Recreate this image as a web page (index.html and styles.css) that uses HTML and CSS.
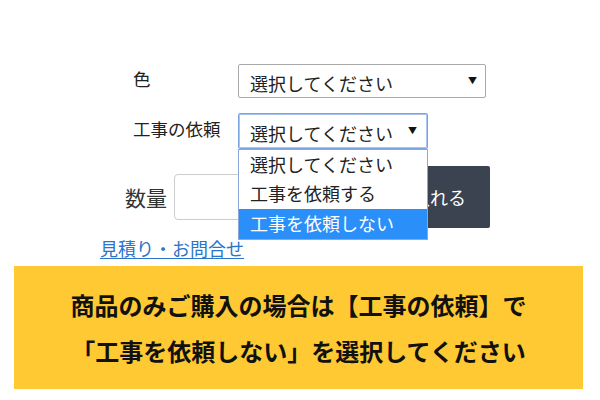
FILE: index.html
```html
<!DOCTYPE html>
<html lang="ja">
<head>
<meta charset="utf-8">
<link rel="stylesheet" href="styles.css">
</head>
<body>
<div class="page">
  <div class="fields">
    <div class="label">色</div>
    <div class="select select-wide">
      <span class="select-text">選択してください</span>
      <span class="arrow">▼</span>
    </div>
    <div class="label">工事の依頼</div>
    <div class="select-wrap">
      <div class="select select-focus">
        <span class="select-text">選択してください</span>
        <span class="arrow">▼</span>
      </div>
      <ul class="dropdown">
        <li class="option">選択してください</li>
        <li class="option">工事を依頼する</li>
        <li class="option option-active">工事を依頼しない</li>
      </ul>
    </div>
  </div>
  <div class="qty-row">
    <span class="qty-label">数量</span>
    <div class="qty-input"></div>
    <button class="cart-btn">カートに入れる</button>
  </div>
  <a class="contact-link" href="#">見積り・お問合せ</a>
  <div class="notice">
    <p>商品のみご購入の場合は【工事の依頼】で</p>
    <p>「工事を依頼しない」を選択してください</p>
  </div>
</div>
</body>
</html>
```

FILE: styles.css
```css
* { box-sizing: border-box; }
html, body {
  margin: 0;
  padding: 0;
  background: #fff;
}
body {
  font-family: "Noto Sans CJK JP", "Noto Sans", sans-serif;
  color: #333;
  width: 600px;
  height: 400px;
  overflow: hidden;
}
.page {
  padding-top: 64px;
}
.fields {
  display: grid;
  grid-template-columns: 105px auto;
  row-gap: 15px;
  padding-left: 133px;
  align-items: center;
}
.label {
  font-size: 17.5px;
  line-height: 22px;
  color: #222;
  margin-top: -4px;
  white-space: nowrap;
}
.select {
  display: flex;
  align-items: center;
  justify-content: space-between;
  height: 34px;
  border: 1px solid #a9a9a9;
  border-radius: 2px;
  padding: 0 8px 0 11px;
  background: #fff;
  color: #222;
}
.select-wide { width: 248px; }
.select-text {
  font-size: 18px;
  line-height: 24px;
  padding-top: 3px;
}
.arrow {
  font-size: 9px;
  line-height: 10px;
  color: #111;
}
.select-wrap {
  position: relative;
  width: 190px;
}
.select-focus {
  height: 36px;
  border: 1px solid #7aa3e0;
  box-shadow: 0 0 0 1px #a9c4ee inset;
  padding-right: 10px;
}
.dropdown {
  position: absolute;
  left: 0;
  top: 36px;
  width: 190px;
  margin: 0;
  padding: 0;
  list-style: none;
  background: #fff;
  border: 1px solid #8aa9d8;
  z-index: 5;
}
.option {
  height: 30px;
  line-height: 28px;
  padding-left: 11px;
  font-size: 18px;
  color: #222;
  white-space: nowrap;
}
.option:first-child { height: 29px; }
.option-active {
  background: #2b8ffa;
  color: #fff;
}
.qty-row {
  display: flex;
  align-items: center;
  margin-top: 17px;
  padding-left: 125px;
  height: 62px;
}
.qty-label {
  font-size: 21px;
  line-height: 28px;
  color: #333;
  margin-right: 7px;
}
.qty-input {
  width: 142px;
  height: 46px;
  border: 1px solid #ccc;
  border-radius: 4px;
  background: #fff;
}
.cart-btn {
  height: 62px;
  border: none;
  background: #3a434f;
  color: #fff;
  font-family: inherit;
  font-size: 18px;
  padding: 0 24px;
  border-radius: 0 2px 2px 0;
}
.contact-link {
  display: inline-block;
  margin-left: 100px;
  margin-top: 8px;
  font-size: 18px;
  line-height: 24px;
  color: #2a74c9;
  text-decoration: underline;
  text-underline-offset: 2px;
}
.notice {
  margin: 5px 0 0 14px;
  width: 569px;
  height: 123px;
  background: #fec932;
  padding-top: 16px;
  text-align: center;
}
.notice p {
  margin: 0;
  font-size: 24px;
  line-height: 46px;
  font-weight: 700;
  color: #111;
}
```
